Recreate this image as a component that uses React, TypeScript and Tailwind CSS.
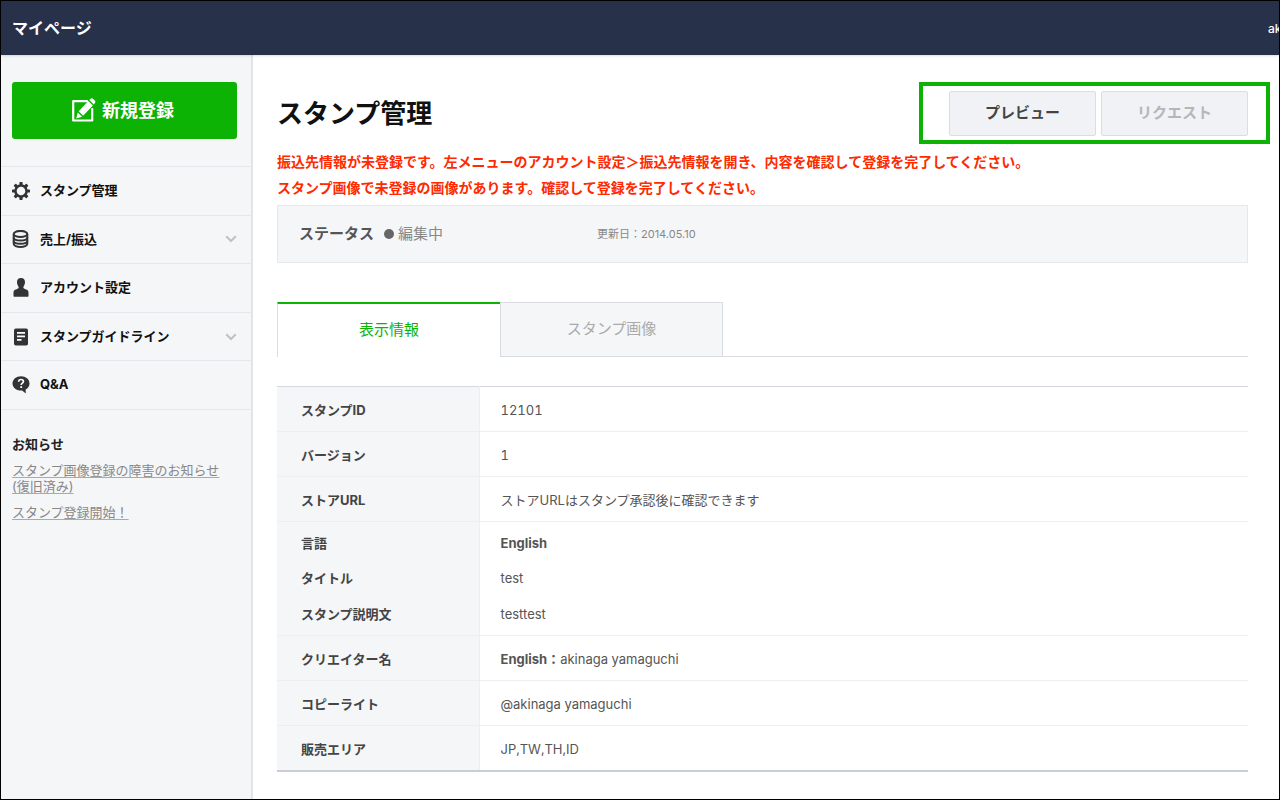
import type { ReactNode } from "react";
import clsx from "clsx";

function ComposeIcon() {
  return (
    <svg width="25" height="25" viewBox="0 0 25 25" fill="none" aria-hidden="true">
      <path d="M16 3.200H2.200v19.300h19V11" stroke="#fff" strokeWidth="2.200" strokeLinejoin="round" strokeLinecap="round" />
      <path d="M5.200 20.500 6.800 14.400l4.300 4.300z" fill="#fff" />
      <path d="M7.700 13.200 17.300 2.900l4.600 4.600L12.100 17.800z" fill="#fff" />
      <path d="M18.300 1.900 19.400.9c.8-.8 1.900-.8 2.700 0l1.700 1.700c.8.800.8 1.800 0 2.700l-1 1.200z" fill="#fff" />
    </svg>
  );
}

function GearIcon() {
  return (
    <svg width="18" height="18" viewBox="0 0 18 18" aria-hidden="true">
      <g fill="#333">
        <rect x="7.4" y="0" width="3.200" height="18" rx=".7" />
        <rect x="7.4" y="0" width="3.200" height="18" rx=".7" transform="rotate(45 9 9)" />
        <rect x="7.4" y="0" width="3.200" height="18" rx=".7" transform="rotate(90 9 9)" />
        <rect x="7.4" y="0" width="3.200" height="18" rx=".7" transform="rotate(135 9 9)" />
        <circle cx="9" cy="9" r="6.800" />
      </g>
      <circle cx="9" cy="9" r="4.300" fill="#f5f6f8" />
    </svg>
  );
}

function CoinsIcon() {
  return (
    <svg width="18" height="18" viewBox="0 0 18 18" fill="none" stroke="#333" strokeWidth="2" aria-hidden="true">
      <ellipse cx="8.500" cy="4" rx="6.800" ry="3.100" />
      <path d="M1.700 4v9.800c0 1.800 3 3.200 6.800 3.200s6.800-1.400 6.800-3.200V4" />
      <path d="M1.700 7.400c0 1.800 3 3.100 6.800 3.100s6.800-1.300 6.800-3.100M1.700 10.700c0 1.800 3 3.100 6.800 3.100s6.800-1.300 6.800-3.100" />
    </svg>
  );
}

function PersonIcon() {
  return (
    <svg width="18" height="19" viewBox="0 0 18 19" fill="#333" aria-hidden="true">
      <path d="M9 0c2.600 0 4 1.600 4 4.100 0 1.800-.5 3-1.300 4.200-.4.600-.5 1.200-.2 1.700.4.700 1.500 1 2.800 1.500 1.600.6 2.200 1.500 2.200 3.200V18c0 .5-.2.700-.7.700H2.200c-.5 0-.7-.2-.7-.7v-3.300c0-1.700.6-2.600 2.200-3.200 1.300-.5 2.400-.8 2.800-1.500.3-.5.2-1.100-.2-1.700C5.500 7.100 5 5.900 5 4.100 5 1.600 6.400 0 9 0z" />
    </svg>
  );
}

function DocumentIcon() {
  return (
    <svg width="18" height="18" viewBox="0 0 18 18" aria-hidden="true">
      <rect x="2" y="0.500" width="14" height="17" rx="1.800" fill="#333" />
      <path d="M5 4.800h8M5 8.300h8M5 11.800h4.500" stroke="#fff" strokeWidth="1.700" />
    </svg>
  );
}

function QuestionIcon() {
  return (
    <svg width="18" height="18" viewBox="0 0 18 18" aria-hidden="true">
      <path d="M9 .3c4.800 0 8.500 3.100 8.500 7.200 0 2.700-1.500 4.900-3.900 6.100l.2 3.900-3.700-3c-.4.100-.7.100-1.100.1C4.200 14.600.5 11.500.5 7.500S4.200.3 9 .3z" fill="#333" />
      <path d="M6.600 5.700c.1-1.400 1-2.200 2.400-2.200s2.400.8 2.400 2c0 1.700-2.200 1.600-2.200 3.500" fill="none" stroke="#fff" strokeWidth="1.700" />
      <rect x="8.300" y="10.200" width="1.800" height="1.800" fill="#fff" />
    </svg>
  );
}

function ChevronIcon() {
  return (
    <svg width="12" height="8" viewBox="0 0 12 8" fill="none" aria-hidden="true">
      <path d="M1.200 1.300 6 6l4.800-4.700" stroke="#bfc1c4" strokeWidth="2" />
    </svg>
  );
}

type MenuItem = { label: string; icon: ReactNode; expandable?: boolean };

const menu: MenuItem[] = [
  { label: "スタンプ管理", icon: <GearIcon /> },
  { label: "売上/振込", icon: <CoinsIcon />, expandable: true },
  { label: "アカウント設定", icon: <PersonIcon /> },
  { label: "スタンプガイドライン", icon: <DocumentIcon />, expandable: true },
  { label: "Q&A", icon: <QuestionIcon /> },
];

type Row = { label: string; value: ReactNode; part?: "first" | "middle" | "last" };

const rows: Row[] = [
  { label: "スタンプID", value: "12101" },
  { label: "バージョン", value: "1" },
  { label: "ストアURL", value: "ストアURLはスタンプ承認後に確認できます" },
  { label: "言語", value: <b>English</b>, part: "first" },
  { label: "タイトル", value: "test", part: "middle" },
  { label: "スタンプ説明文", value: "testtest", part: "last" },
  { label: "クリエイター名", value: <><b>English：</b>akinaga yamaguchi</> },
  { label: "コピーライト", value: "@akinaga yamaguchi" },
  { label: "販売エリア", value: "JP,TW,TH,ID" },
];

const rowClass = {
  single: "h-[45px] border-b border-[#eceef0]",
  first: "h-[39px]",
  middle: "h-[36px]",
  last: "h-[39px] border-b border-[#eceef0]",
};

const cellPad = { single: "pt-[3px]", first: "pt-1", middle: "pt-px", last: "pb-0.5" };

function Sidebar() {
  return (
    <aside className="w-[252px] shrink-0 border-r-2 border-[#e3e4e6] bg-[#f5f6f8]">
      <div className="pt-[27px] pr-3.5 pb-[27px] pl-[11px]">
        <button type="button" className="flex h-[57px] w-full items-center justify-center gap-1.5 rounded-[3px] bg-[#0cb204] pr-1 text-[18px] font-bold text-white">
          <ComposeIcon />
          新規登録
        </button>
      </div>
      <nav className="grid h-61 auto-rows-fr border-t border-[#e6e7ea]">
        {menu.map((item) => (
          <a key={item.label} href="#" className="flex items-center border-b border-[#e6e7ea] pr-3.5 pl-[11px] text-[13px] font-bold text-[#111]">
            <span className="flex w-7 shrink-0">{item.icon}</span>
            <span className="flex-1">{item.label}</span>
            {item.expandable && <ChevronIcon />}
          </a>
        ))}
      </nav>
      <section className="pt-6 pr-3 pl-[11px] text-[13px]">
        <h2 className="leading-5 font-bold text-[#222]">お知らせ</h2>
        <ul className="mt-2 flex flex-col gap-2.5 leading-4 text-[#888]">
          <li><a href="#" className="underline decoration-[#aaa] underline-offset-2">スタンプ画像登録の障害のお知らせ<br />(復旧済み)</a></li>
          <li><a href="#" className="underline decoration-[#aaa] underline-offset-2">スタンプ登録開始！</a></li>
        </ul>
      </section>
    </aside>
  );
}

export default function App() {
  return (
    <div className="flex min-h-screen flex-col border border-black bg-white font-['Inter','Noto_Sans_CJK_JP',sans-serif] text-[#555]">
      <header className="relative flex h-[54px] shrink-0 items-center justify-between bg-[#27314a] pl-[11px] text-white shadow-sm">
        <div className="text-base font-bold">マイページ</div>
        <div className="w-[11px] overflow-hidden pt-0.5 text-[12px] font-medium whitespace-nowrap">ak</div>
      </header>

      <div className="flex flex-1">
        <Sidebar />
        <main className="min-w-0 flex-1 pt-9 pr-[31px] pb-6 pl-6">
          <div className="flex items-center justify-between">
            <h1 className="text-[26px] leading-9 font-bold text-[#111]">スタンプ管理</h1>
            <div className="relative flex gap-[5px] text-[15px] font-bold">
              <button type="button" className="h-[45px] w-[147px] rounded-[2px] border border-[#dadee4] bg-[#f0f2f5] text-[#444]">プレビュー</button>
              <button type="button" disabled className="h-[45px] w-[147px] rounded-[2px] border border-[#dadee4] bg-[#f0f2f5] text-[#b5b6b8]">リクエスト</button>
              <div className="pointer-events-none absolute -top-[9px] -right-[22px] -bottom-2 -left-[30px] border-4 border-[#0cb204]" />
            </div>
          </div>

          <div className="mt-[13px] text-[14px] leading-[26px] font-bold text-[#ff2a00]">
            <p>振込先情報が未登録です。左メニューのアカウント設定＞振込先情報を開き、内容を確認して登録を完了してください。</p>
            <p>スタンプ画像で未登録の画像があります。確認して登録を完了してください。</p>
          </div>

          <div className="mt-1 flex h-[58px] items-center border border-[#e3e7ee] bg-[#f5f6f8] pl-[21px]">
            <div className="flex w-[298px] items-center text-[15px]">
              <span className="font-bold text-[#555]">ステータス</span>
              <span className="mr-1 ml-2.5 size-2.5 rounded-full bg-[#666]" />
              <span className="text-[#888]">編集中</span>
            </div>
            <span className="text-[11px] text-[#888]">更新日：2014.05.10</span>
          </div>

          <div role="tablist" className="mt-[39px] flex h-[55px] text-[15px]">
            <button type="button" role="tab" aria-selected="true" className="w-[223px] border-t-2 border-l border-t-[#0cb204] border-l-[#d9dce1] text-[#0cb204]">表示情報</button>
            <button type="button" role="tab" aria-selected="false" className="w-[223px] border border-[#d9dce1] bg-[#f5f6f8] text-[#aaa]">スタンプ画像</button>
            <div className="flex-1 border-b border-[#d9dce1]" />
          </div>

          <table className="mt-[29px] w-full border-collapse border-t border-b-2 border-t-[#d5d9df] border-b-[#c9cdd6] text-[13px]">
            <tbody>
              {rows.map((row) => {
                const part = row.part ?? "single";
                return (
                  <tr key={row.label} className={rowClass[part]}>
                    <th scope="row" className={clsx("w-[202px] border-r border-[#eceef0] bg-[#f5f6f8] pl-6 text-left font-bold text-[#444]", cellPad[part])}>{row.label}</th>
                    <td className={clsx("pl-[21px] text-[#555] tabular-nums", cellPad[part])}>{row.value}</td>
                  </tr>
                );
              })}
            </tbody>
          </table>
        </main>
      </div>
    </div>
  );
}
